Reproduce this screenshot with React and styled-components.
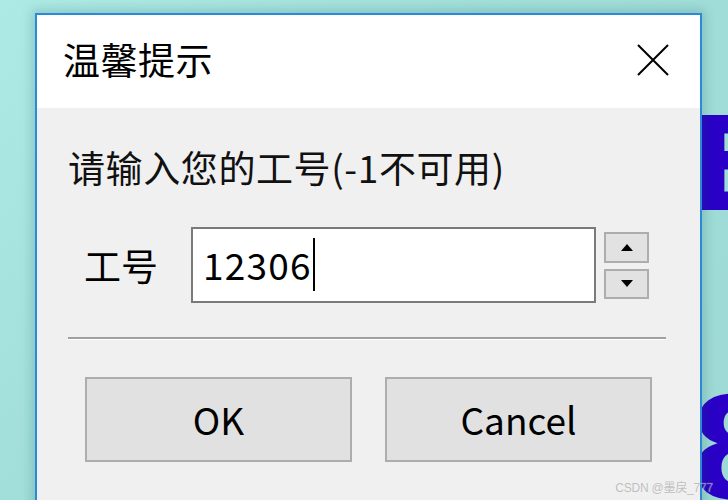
import React from "react";
import styled, { createGlobalStyle } from "styled-components";

const Global = createGlobalStyle`
  html, body {
    margin: 0;
    padding: 0;
    width: 728px;
    height: 500px;
    overflow: hidden;
    background: #a4e2dd;
  }
  * { box-sizing: border-box; }
`;

const FONT = `"Noto Sans CJK SC", "Noto Sans", sans-serif`;

const Desktop = styled.div`
  position: relative;
  width: 728px;
  height: 500px;
  overflow: hidden;
  background: linear-gradient(135deg, #aeeae5 0%, #a2dfda 40%, #9ed9d4 100%);
  padding: 13px 0 0 35px;
  font-family: ${FONT};
`;

const BackText = styled.span`
  position: absolute;
  left: ${(p) => p.$left}px;
  top: ${(p) => p.$top}px;
  font-family: "DejaVu Sans", sans-serif;
  font-weight: 900;
  font-size: ${(p) => p.$size}px;
  line-height: 1;
  color: #2a00c6;
`;

const Dialog = styled.div`
  position: relative;
  width: 667px;
  height: 520px;
  border: 2px solid #2b88db;
  border-bottom: none;
  background: #f0f0f0;
  box-shadow: 0 0 10px 3px rgba(20, 90, 90, 0.22);
  display: flex;
  flex-direction: column;
`;

const TitleBar = styled.div`
  height: 93px;
  background: #ffffff;
  display: flex;
  align-items: center;
  justify-content: space-between;
  padding: 0 31px 0 26px;
`;

const Title = styled.div`
  font-size: 37px;
  color: #000;
  line-height: 1;
  padding-bottom: 4px;
  letter-spacing: 0.5px;
`;

const CloseButton = styled.div`
  width: 32px;
  height: 32px;
  display: flex;
  margin-bottom: 3px;
`;

const Body = styled.div`
  display: flex;
  flex-direction: column;
  padding: 36px 34px 0 31px;
`;

const Prompt = styled.div`
  font-size: 37px;
  line-height: 46px;
  color: #111;
  letter-spacing: 0.6px;
`;

const FieldRow = styled.div`
  display: flex;
  align-items: center;
  margin-top: 37px;
  padding-left: 16px;
`;

const Label = styled.div`
  font-size: 37px;
  color: #000;
  width: 107px;
  line-height: 1;
`;

const InputBox = styled.div`
  width: 405px;
  height: 76px;
  border: 2px solid #7a7a7a;
  background: #fff;
  display: flex;
  align-items: center;
  padding: 0 0 2px 10px;
  font-size: 37px;
  letter-spacing: 1.2px;
  color: #000;
`;

const Caret = styled.span`
  display: inline-block;
  width: 2px;
  height: 53px;
  background: #000;
  margin-left: 1px;
`;

const Spinner = styled.div`
  display: flex;
  flex-direction: column;
  gap: 6px;
  margin-left: 8px;
`;

const SpinButton = styled.div`
  width: 45px;
  height: ${(p) => p.$h}px;
  border: 2px solid #adadad;
  background: #e2e2e2;
  display: flex;
  align-items: center;
  justify-content: center;
`;

const Separator = styled.div`
  margin-top: 34px;
  height: 3px;
  border-top: 2px solid #a0a0a0;
  border-bottom: 1px solid #ffffff;
`;

const ButtonRow = styled.div`
  display: flex;
  gap: 33px;
  margin-top: 37px;
  padding-left: 17px;
`;

const Button = styled.div`
  width: 267px;
  height: 85px;
  border: 2px solid #adadad;
  background: #e1e1e1;
  display: flex;
  align-items: center;
  justify-content: center;
  font-size: 37px;
  color: #000;
  padding-bottom: 2px;
`;

const Watermark = styled.div`
  position: absolute;
  right: 15px;
  bottom: 5px;
  font-family: "Liberation Sans", "Noto Sans CJK SC", sans-serif;
  font-size: 12px;
  color: rgba(140, 140, 140, 0.55);
  text-shadow: 0 0 1px rgba(255, 255, 255, 0.6);
  letter-spacing: -0.2px;
`;

const XIcon = () => (
  <svg width="32" height="32" viewBox="0 0 32 32">
    <path d="M1 1 L31 31 M31 1 L1 31" stroke="#000" strokeWidth="2" fill="none" />
  </svg>
);

const Tri = ({ up }) => (
  <svg width="12" height="7" viewBox="0 0 12 7">
    <polygon points={up ? "6,0 12,7 0,7" : "0,0 12,0 6,7"} fill="#000" />
  </svg>
);

export default function App() {
  return (
    <>
      <Global />
      <Desktop>
        <BackText $left={688} $top={100} $size={130}>E</BackText>
        <BackText $left={688} $top={380} $size={140}>8</BackText>
        <Dialog>
          <TitleBar>
            <Title>温馨提示</Title>
            <CloseButton>
              <XIcon />
            </CloseButton>
          </TitleBar>
          <Body>
            <Prompt>请输入您的工号(-1不可用)</Prompt>
            <FieldRow>
              <Label>工号</Label>
              <InputBox>
                12306
                <Caret />
              </InputBox>
              <Spinner>
                <SpinButton $h={31}>
                  <Tri up />
                </SpinButton>
                <SpinButton $h={30}>
                  <Tri />
                </SpinButton>
              </Spinner>
            </FieldRow>
            <Separator />
            <ButtonRow>
              <Button>OK</Button>
              <Button>Cancel</Button>
            </ButtonRow>
          </Body>
        </Dialog>
        <Watermark>CSDN @墨戾_777</Watermark>
      </Desktop>
    </>
  );
}
